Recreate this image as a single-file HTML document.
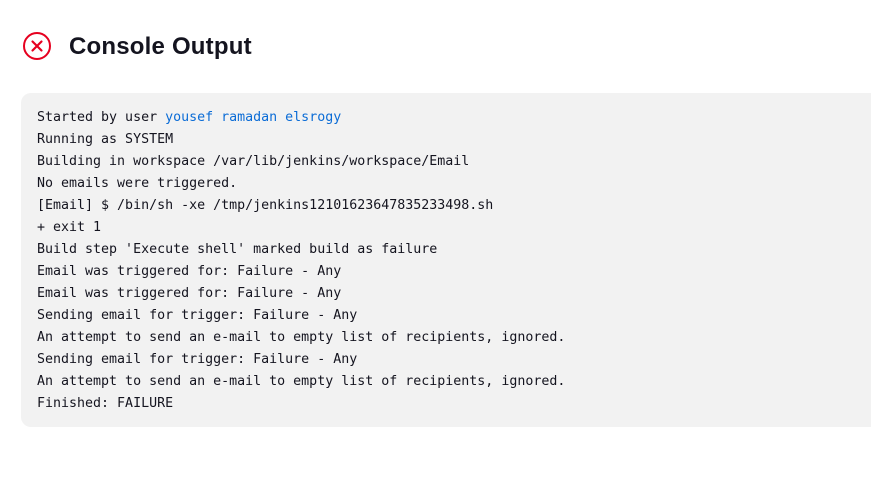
<!DOCTYPE html>
<html><head><meta charset="utf-8"><style>
html,body{margin:0;padding:0;background:#fff;width:871px;height:494px;overflow:hidden}
.icon{position:absolute;left:22px;top:31px}
h1{position:absolute;left:69px;top:31px;margin:0;font:bold 24px/32px "Liberation Sans",sans-serif;color:#14141f;letter-spacing:0.2px}
pre{position:absolute;left:21px;top:93px;width:870px;height:334px;margin:0;box-sizing:border-box;padding:14px 16px 10px;background:#f2f2f2;border-radius:10px;font:13.3px/22px "DejaVu Sans Mono",monospace;color:#14141f}
a{color:#0b6cd6;text-decoration:none}
</style></head><body>
<svg class="icon" width="30" height="30" viewBox="0 0 30 30"><circle cx="15" cy="15" r="13" fill="none" stroke="#e6001f" stroke-width="2"/><path d="M10.5 10.5L19.5 19.5M19.5 10.5L10.5 19.5" stroke="#e6001f" stroke-width="2.2" stroke-linecap="round"/></svg>
<h1>Console Output</h1>
<pre>Started by user <a>yousef ramadan elsrogy</a>
Running as SYSTEM
Building in workspace /var/lib/jenkins/workspace/Email
No emails were triggered.
[Email] $ /bin/sh -xe /tmp/jenkins12101623647835233498.sh
+ exit 1
Build step 'Execute shell' marked build as failure
Email was triggered for: Failure - Any
Email was triggered for: Failure - Any
Sending email for trigger: Failure - Any
An attempt to send an e-mail to empty list of recipients, ignored.
Sending email for trigger: Failure - Any
An attempt to send an e-mail to empty list of recipients, ignored.
Finished: FAILURE</pre>
</body></html>
